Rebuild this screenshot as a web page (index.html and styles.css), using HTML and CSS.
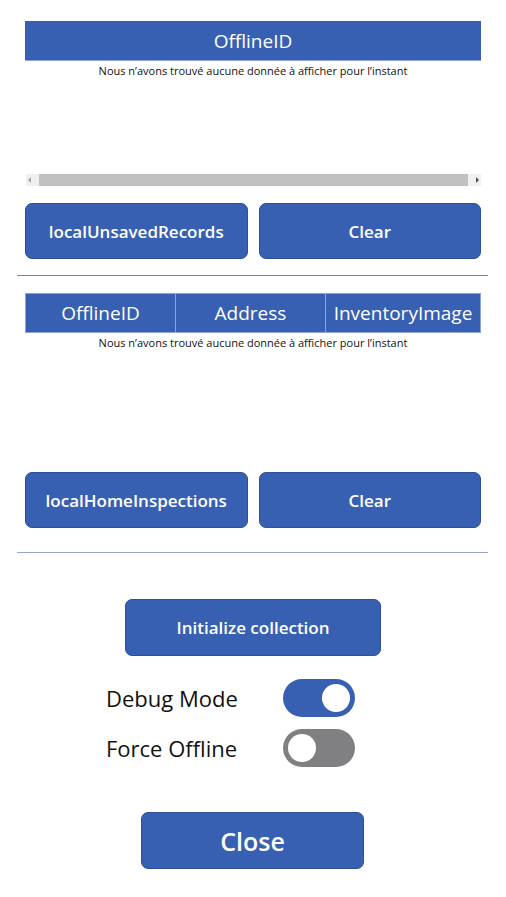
FILE: index.html
```html
<!DOCTYPE html>
<html>
<head>
<meta charset="utf-8">
<link rel="stylesheet" href="styles.css">
</head>
<body>
<div class="page">
  <div class="gallery g1">
    <div class="thead"><div class="th">OfflineID</div></div>
    <div class="empty">Nous n’avons trouvé aucune donnée à afficher pour l’instant</div>
  </div>
  <div class="scrollbar">
    <span class="arrow left"></span>
    <div class="thumb"></div>
    <span class="arrow right"></span>
  </div>
  <div class="btnrow r1">
    <button class="btn">localUnsavedRecords</button>
    <button class="btn">Clear</button>
  </div>
  <div class="divider d1"></div>
  <div class="gallery g2">
    <div class="thead three">
      <div class="th c1">OfflineID</div>
      <div class="th c2">Address</div>
      <div class="th c3">InventoryImage</div>
    </div>
    <div class="empty">Nous n’avons trouvé aucune donnée à afficher pour l’instant</div>
  </div>
  <div class="btnrow">
    <button class="btn">localHomeInspections</button>
    <button class="btn">Clear</button>
  </div>
  <div class="divider d2"></div>
  <button class="btn init">Initialize collection</button>
  <div class="toggles">
    <div class="trow">
      <span class="tlabel">Debug Mode</span>
      <span class="toggle on"><span class="knob"></span></span>
    </div>
    <div class="trow">
      <span class="tlabel">Force Offline</span>
      <span class="toggle off"><span class="knob"></span></span>
    </div>
  </div>
  <button class="btn close">Close</button>
</div>
</body>
</html>
```
FILE: styles.css
```css
* { box-sizing: border-box; }
html, body { margin: 0; padding: 0; background: #fff; }
body { font-family: "Open Sans", "Noto Sans", sans-serif; color: #000; }
.page { width: 506px; padding-top: 21px; display: flex; flex-direction: column; }
.gallery { margin-left: 25px; width: 456px; }
.g1 { height: 153px; }
.g2 { height: 179px; margin-top: 17px; }
.thead { height: 40px; background: #3860b2; border-bottom: 1px solid #8ea3d6; display: flex; }
.thead.three { border: 1px solid #8ea3d6; }
.th { flex: 1; color: #fff; font-size: 19px; display: flex; align-items: center; justify-content: center; white-space: nowrap; overflow: hidden; }
.three .th { flex: none; }
.three .c1 { width: 149px; }
.three .c2 { width: 150px; }
.three .c3 { flex: 1; }
.three .th + .th { border-left: 1px solid #8ea3d6; }
.empty { text-align: center; font-size: 11px; line-height: 14px; margin-top: 3px; color: #111; }
.scrollbar { margin-left: 26px; width: 455px; height: 12px; background: #f0f0f0; display: flex; align-items: center; }
.thumb { flex: 1; height: 12px; background: #c1c1c1; margin: 0 4px; }
.arrow { width: 9px; height: 12px; position: relative; }
.arrow::after { content: ""; position: absolute; top: 3px; border-style: solid; border-width: 3px; border-color: transparent; }
.arrow.left::after { left: 2px; border-right-color: #a3a3a3; border-left-width: 0; }
.arrow.right::after { right: 2px; border-left-color: #505050; border-right-width: 0; }
.btn { background: #3860b2; border: 1px solid #2e4f95; border-radius: 7px; color: #fff; font-family: "Open Sans", "Noto Sans", sans-serif; font-weight: 600; font-size: 17px; height: 56px; padding: 0; cursor: pointer; }
.btnrow { display: flex; gap: 11px; margin-left: 25px; width: 456px; }
.btnrow .btn { flex: 1; }
.r1 { margin-top: 17px; }
.divider { margin-left: 17px; width: 471px; height: 1px; }
.d1 { margin-top: 16px; background: #7480bd; }
.d2 { margin-top: 24px; background: #9aa2cc; }
.init { margin-left: 125px; width: 256px; margin-top: 46px; height: 57px; }
.toggles { display: flex; flex-direction: column; gap: 12px; margin-top: 23px; margin-left: 106px; }
.trow { display: flex; align-items: center; height: 38px; }
.tlabel { width: 177px; font-size: 22px; color: #111; }
.toggle { width: 72px; height: 38px; border-radius: 19px; display: flex; align-items: center; padding: 0 5px; }
.toggle.on { background: #3860b2; justify-content: flex-end; }
.toggle.off { background: #808083; justify-content: flex-start; }
.knob { width: 28px; height: 28px; border-radius: 50%; background: #fff; }
.close { margin-left: 141px; width: 223px; margin-top: 45px; height: 57px; font-size: 25px; }
```
